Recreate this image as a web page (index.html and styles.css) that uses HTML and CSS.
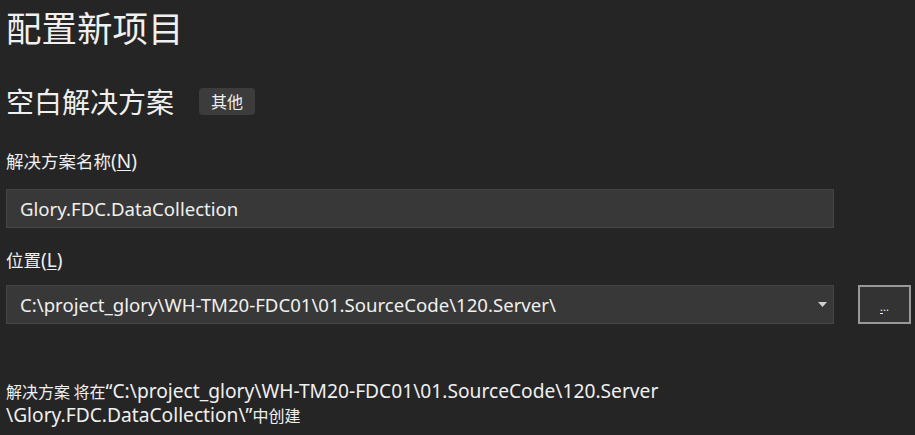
FILE: index.html
```html
<!DOCTYPE html>
<html lang="zh-CN">
<head>
<meta charset="utf-8">
<link rel="stylesheet" href="styles.css">
</head>
<body>
<div class="page">
  <h1 class="title">配置新项目</h1>
  <div class="subtitle-row">
    <h2 class="subtitle">空白解决方案</h2>
    <span class="badge">其他</span>
  </div>
  <label class="label label-name"><span class="cjk">解决方案名称</span>(<u>N</u>)</label>
  <div class="input-row">
    <div class="field">Glory.FDC.DataCollection</div>
  </div>
  <label class="label label-loc"><span class="cjk">位置</span>(<u>L</u>)</label>
  <div class="input-row">
    <div class="field combo">
      <span>C:\project_glory\WH-TM20-FDC01\01.SourceCode\120.Server\</span>
      <svg class="arrow" width="9" height="5" viewBox="0 0 9 5"><path d="M0 0H9L4.5 5Z" fill="#d0d0d0"/></svg>
    </div>
    <button class="browse"><span><u>.</u>..</span></button>
  </div>
  <p class="note"><span class="cjk">解决方案 将在</span>“C:\project_glory\WH-TM20-FDC01\01.SourceCode\120.Server<br>\Glory.FDC.DataCollection\”<span class="cjk">中创建</span></p>
</div>
</body>
</html>
```
FILE: styles.css
```css
html, body {
  margin: 0;
  padding: 0;
  background: #252526;
  color: #f0f0f0;
  font-family: "Noto Sans", "Noto Sans CJK SC", sans-serif;
}
.page {
  width: 915px;
  height: 435px;
  padding: 0 0 0 6px;
  box-sizing: border-box;
  overflow: hidden;
}
.cjk {
  font-family: "Noto Sans CJK SC", sans-serif;
}
.title {
  margin: 0;
  padding-top: 5px;
  font-size: 35.5px;
  font-weight: 400;
  line-height: 44px;
  font-family: "Noto Sans CJK SC", sans-serif;
}
.subtitle-row {
  display: flex;
  align-items: center;
  gap: 25px;
  margin-top: 37px;
  height: 30px;
}
.subtitle {
  margin: 0;
  font-size: 28px;
  font-weight: 400;
  line-height: 30px;
  font-family: "Noto Sans CJK SC", sans-serif;
}
.badge {
  background: #3c3c3c;
  border-radius: 4px;
  font-size: 16px;
  line-height: 27px;
  padding: 0 12px;
  font-family: "Noto Sans CJK SC", sans-serif;
}
.label {
  display: block;
  font-size: 19px;
  line-height: 22px;
}
.label .cjk { font-size: 17.5px; }
.label u, .browse u { text-decoration-thickness: 1px; text-underline-offset: 2px; }
.label-name { margin-top: 34px; }
.label-loc { margin-top: 21px; }
.input-row {
  display: flex;
  align-items: stretch;
  gap: 24px;
}
.label-name + .input-row { margin-top: 17px; }
.label-loc + .input-row { margin-top: 14px; }
.field {
  width: 828px;
  height: 39px;
  box-sizing: border-box;
  background: #383838;
  border: 1px solid #444444;
  padding: 0 13px;
  font-size: 18.6px;
  line-height: 37px;
  color: #f0f0f0;
  white-space: nowrap;
}
.combo {
  display: flex;
  align-items: center;
  justify-content: space-between;
  padding-right: 6px;
}
.browse {
  width: 53px;
  height: 39px;
  box-sizing: border-box;
  background: #333333;
  border: 2px solid #999999;
  color: #f0f0f0;
  font-size: 11px;
  padding: 0 0 8px 0;
  display: flex;
  align-items: flex-end;
  justify-content: center;
  font-family: "Noto Sans", sans-serif;
}
.note {
  margin: 55px 0 0 0;
  font-size: 19.2px;
  line-height: 23px;
  white-space: nowrap;
}
.note .cjk { font-size: 16px; }
```
